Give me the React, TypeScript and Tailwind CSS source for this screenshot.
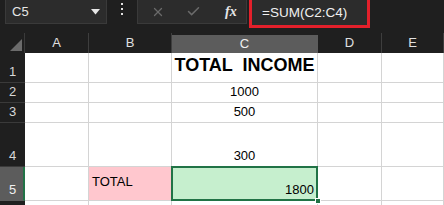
import { Check, X } from 'lucide-react'

const cols = [
  { key: 'A', w: 'w-[64px]' },
  { key: 'B', w: 'w-[83px]' },
  { key: 'C', w: 'w-[146px]' },
  { key: 'D', w: 'w-[64px]' },
  { key: 'E', w: 'w-[62px]' },
]

const rows = [
  { n: '1', h: 'h-[30px]' },
  { n: '2', h: 'h-[20px]' },
  { n: '3', h: 'h-[20px]' },
  { n: '4', h: 'h-[44px]' },
  { n: '5', h: 'h-[34px]' },
  { n: '', h: 'h-[10px]' },
]

function cellContent(row: string, col: string) {
  if (col === 'C' && row === '1')
    return <span className="w-full text-center text-[18px] font-bold text-black pb-[3px] whitespace-pre">TOTAL  INCOME</span>
  if (col === 'C' && (row === '2' || row === '3' || row === '4')) {
    const v = row === '2' ? '1000' : row === '3' ? '500' : '300'
    return <span className="w-full text-center text-[13px] text-black pb-[1px]">{v}</span>
  }
  if (col === 'B' && row === '5')
    return <span className="pl-[3px] text-[13px] text-black pb-[9px]">TOTAL</span>
  return null
}

export default function App() {
  return (
    <div className="w-[444px] h-[205px] overflow-hidden bg-[#1f1f1f] font-['Liberation_Sans',sans-serif] select-none">
      {/* Toolbar: name box + formula bar */}
      <div className="h-[33px] flex items-start">
        <div className="ml-[5px] w-[102px] h-[24px] bg-[#2c2c2c] border border-[#3a3a3a] border-t-0 flex items-center justify-between pl-[6px] pr-[6px]">
          <span className="text-[13px] text-[#e6e6e6]">C5</span>
          <svg width="9" height="6" viewBox="0 0 9 6"><path d="M0 0h9L4.5 5.5z" fill="#e6e6e6" /></svg>
        </div>
        <div className="ml-[13px] mt-[3px] w-[4px] flex flex-col items-center gap-[3px]">
          <span className="w-[2px] h-[2px] bg-[#e0e0e0]" />
          <span className="w-[2px] h-[2px] bg-[#e0e0e0]" />
          <span className="w-[2px] h-[2px] bg-[#e0e0e0]" />
        </div>
        <div className="ml-[13px] w-[110px] h-[24px] bg-[#2c2c2c] border border-[#3a3a3a] border-t-0 flex items-center">
          <X className="ml-[13px] w-[14px] h-[14px] text-[#6a6a6a]" strokeWidth={2.2} />
          <Check className="ml-[21px] w-[15px] h-[15px] text-[#6a6a6a]" strokeWidth={2.4} />
          <span className="ml-[24px] text-[14px] italic font-bold text-[#e6e6e6] font-['Liberation_Serif',serif]">fx</span>
        </div>
        <div className="ml-[2px] w-[121px] h-[28px] bg-[#2c2c2c] border-[3px] border-t-0 border-[#e3202b] flex items-center pl-[10px]">
          <span className="text-[13.5px] text-[#f0f0f0] pt-[1px]">=SUM(C2:C4)</span>
        </div>
      </div>

      {/* Column headers */}
      <div className="flex h-[20px]">
        <div className="w-[25px] h-full flex items-end justify-start pl-[10px] pb-[2px] border-r border-[#3a3a3a]">
          <svg width="12" height="12" viewBox="0 0 12 12"><path d="M12 0v12H0z" fill="#6b6b6b" /></svg>
        </div>
        {cols.map(c => (
          <div
            key={c.key}
            className={`${c.w} shrink-0 h-full flex items-center justify-center text-[13px] border-r ${
              c.key === 'C'
                ? 'bg-[#5c5c5c] text-[#f0f0f0] border-[#5c5c5c] border-b-2 border-b-[#217346] mt-[2px]'
                : 'text-[#e0e0e0] border-[#3e3e3e]'
            }`}
          >
            {c.key}
          </div>
        ))}
      </div>

      {/* Rows */}
      {rows.map(r => (
        <div key={r.n || 'x'} className={`flex ${r.h}`}>
          <div
            className={`w-[25px] shrink-0 h-full flex items-end pl-[9px] pb-[1px] text-[13px] border-b ${
              r.n === '5'
                ? 'bg-[#5c5c5c] text-[#f0f0f0] border-[#5c5c5c] border-r-2 border-r-[#217346]'
                : 'text-[#d8d8d8] border-[#3a3a3a]'
            }`}
          >
            {r.n}
          </div>
          {cols.map(c => {
            const selected = c.key === 'C' && r.n === '5'
            const pink = c.key === 'B' && r.n === '5'
            return (
              <div
                key={c.key}
                className={`${c.w} shrink-0 h-full flex items-end border-r border-b border-[#d4d4d4] ${
                  pink ? 'bg-[#ffc7ce]' : selected ? 'bg-[#c6efce]' : 'bg-white'
                } ${selected ? 'relative' : ''}`}
              >
                {selected && (
                  <>
                    <div className="absolute -left-px -top-px -right-px -bottom-px border-2 border-[#217346]" />
                    <span className="w-full text-right text-[13px] text-black pr-[3px] pb-[1px]">1800</span>
                    <div className="absolute -right-[4px] -bottom-[4px] w-[6px] h-[6px] bg-[#217346] border border-white" />
                  </>
                )}
                {!selected && cellContent(r.n, c.key)}
              </div>
            )
          })}
        </div>
      ))}
    </div>
  )
}
